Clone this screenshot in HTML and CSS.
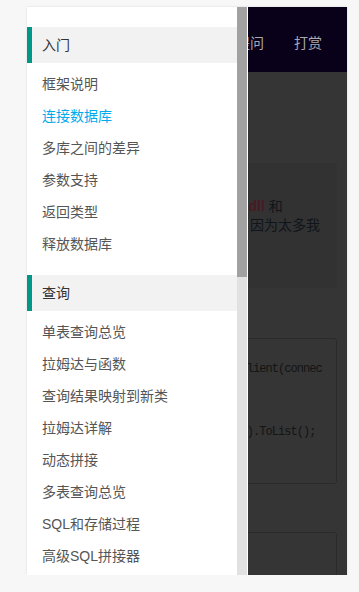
FILE: index.html
```html
<!DOCTYPE html>
<html lang="zh-CN">
<head>
    <meta charset="UTF-8">
    <meta name="viewport" content="width=device-width, initial-scale=1.0">
    <title>SqlSugar 文档</title>
    <link rel="stylesheet" href="styles.css">
</head>
<body>
    <div class="frame">
        <div class="page">
            <div class="topbar">
                <a class="topbar-item">提问</a>
                <a class="topbar-item">打赏</a>
            </div>
            <div class="content">
                <h1 class="title">连接数据库</h1>
                <div class="quote">
                    需要引用的文件<br>
                    在项目中必须要引用 <b class="red">SqlSugar.dll</b> 和<br>
                    数据库驱动程序，不一一列举，因为太多我<br>
                    们只列出常用的<br>
                    几种数据库
                </div>
                <h2 class="subtitle">创建对象</h2>
                <pre class="code">SqlSugarClient db=new SqlSugarClient(connec
tionConfig);
//查询所有
var list=db.Queryable&lt;Student&gt;().ToList();
</pre>
                <h2 class="subtitle">配置说明</h2>
                <pre class="code">//连接参数
</pre>
            </div>
        </div>

        <div class="drawer">
            <div class="drawer-nav">
                <div class="nav-group">
                    <div class="nav-title">入门</div>
                    <ul class="nav-list">
                        <li>框架说明</li>
                        <li class="active">连接数据库</li>
                        <li>多库之间的差异</li>
                        <li>参数支持</li>
                        <li>返回类型</li>
                        <li>释放数据库</li>
                    </ul>
                </div>
                <div class="nav-group">
                    <div class="nav-title">查询</div>
                    <ul class="nav-list">
                        <li>单表查询总览</li>
                        <li>拉姆达与函数</li>
                        <li>查询结果映射到新类</li>
                        <li>拉姆达详解</li>
                        <li>动态拼接</li>
                        <li>多表查询总览</li>
                        <li>SQL和存储过程</li>
                        <li>高级SQL拼接器</li>
                    </ul>
                </div>
            </div>
            <div class="scrollbar">
                <div class="scrollbar-thumb"></div>
            </div>
        </div>
    </div>
</body>
</html>
```

FILE: styles.css
```css
html, body {
    margin: 0;
    padding: 0;
}
body {
    background: #f7f7f7;
    font-family: "Liberation Sans", "Noto Sans CJK SC", sans-serif;
    font-size: 14px;
    color: #333;
}
.frame {
    position: relative;
    width: 320px;
    height: 568px;
    margin: 7px 0 0 27px;
    overflow: hidden;
    background: #353535;
    box-shadow: 0 0 2px rgba(0, 0, 0, 0.12);
}

/* page under the drawer */
.page {
    height: 100%;
}
.topbar {
    height: 65px;
    background: #09001a;
    display: flex;
    justify-content: flex-end;
    align-items: center;
    padding: 5px 10px 0 0;
    box-sizing: border-box;
}
.topbar-item {
    padding: 0 15px;
    color: #a9a9b0;
    font-size: 14px;
}
.content {
    padding: 0 10px;
}
.title {
    margin: 0;
    height: 91px;
    line-height: 91px;
    font-size: 20px;
    font-weight: normal;
    color: #111;
}
.quote {
    background: #323232;
    border-left: 5px solid #2a2a2a;
    padding: 15px 12px;
    line-height: 19px;
    color: #10151b;
}
.red {
    color: #4a1a22;
}
.subtitle {
    margin: 0;
    height: 50px;
    line-height: 50px;
    font-size: 16px;
    font-weight: normal;
    color: #111;
}
.code {
    margin: 0;
    padding: 20px 15px;
    border: 1px solid #2a2a2a;
    border-radius: 3px;
    font-family: "Liberation Mono", "Noto Sans CJK SC", monospace;
    font-size: 12px;
    letter-spacing: -0.95px;
    line-height: 21px;
    color: #141414;
    white-space: pre;
    overflow: hidden;
    height: 146px;
    box-sizing: border-box;
}
.code + .subtitle {
    height: 48px;
}

/* side drawer */
.drawer {
    position: absolute;
    top: 0;
    left: 0;
    bottom: 0;
    width: 221px;
    display: flex;
    background: #fff;
    border-right: 1px solid #fff;
    box-sizing: border-box;
}
.drawer-nav {
    flex: 1;
    overflow: hidden;
    padding-top: 20px;
}
.scrollbar {
    width: 10px;
    background: #e1e1e1;
}
.scrollbar-thumb {
    height: 270px;
    background: #a1a1a1;
}
.nav-group + .nav-group {
    margin-top: 10px;
}
.nav-title {
    height: 36px;
    line-height: 36px;
    background: #f2f2f2;
    border-left: 5px solid #009688;
    padding-left: 10px;
    color: #333;
}
.nav-list {
    list-style: none;
    margin: 0;
    padding: 5px 0;
}
.nav-list li {
    height: 32px;
    line-height: 32px;
    padding-left: 15px;
    color: #555;
}
.nav-list li.active {
    color: #01aaed;
}
```
